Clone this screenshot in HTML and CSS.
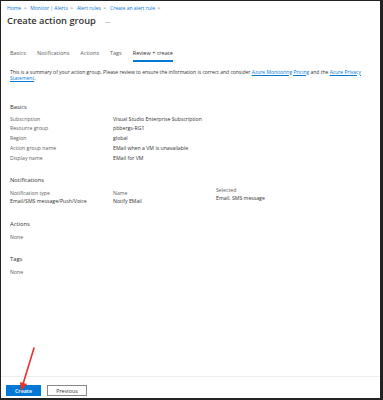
FILE: index.html
```html
<!DOCTYPE html>
<html lang="en">
<head>
    <meta charset="UTF-8">
    <title>Create action group</title>
    <link rel="stylesheet" href="styles.css">
</head>
<body>
    <div class="frame">
        <div class="header">
            <div class="breadcrumb">
                <a>Home</a><span class="sep">&gt;</span>
                <a>Monitor | Alerts</a><span class="sep">&gt;</span>
                <a>Alert rules</a><span class="sep">&gt;</span>
                <a>Create an alert rule</a><span class="sep">&gt;</span>
            </div>
            <h1>Create action group <span class="more">&middot;&middot;&middot;</span></h1>
        </div>

        <div class="content">
            <div class="tabs">
                <span class="tab">Basics</span>
                <span class="tab">Notifications</span>
                <span class="tab">Actions</span>
                <span class="tab">Tags</span>
                <span class="tab active">Review + create</span>
            </div>

            <p class="intro">This is a summary of your action group. Please review to ensure the information is correct and consider <a>Azure Monitoring Pricing</a> and the <a>Azure Privacy</a> <a>Statement</a>.</p>

            <div class="section first">
                <h3>Basics</h3>
                <div class="props">
                    <span class="label">Subscription</span><span>Visual Studio Enterprise Subscription</span>
                    <span class="label">Resource group</span><span>pbbergs-RG1</span>
                    <span class="label">Region</span><span>global</span>
                    <span class="label">Action group name</span><span>EMail when a VM is unavailable</span>
                    <span class="label">Display name</span><span>EMail for VM</span>
                </div>
            </div>

            <div class="section">
                <h3>Notifications</h3>
                <div class="table">
                    <div class="col">
                        <span class="label">Notification type</span>
                        <span>Email/SMS message/Push/Voice</span>
                    </div>
                    <div class="col">
                        <span class="label">Name</span>
                        <span>Notify EMail</span>
                    </div>
                    <div class="col raised">
                        <span class="label">Selected</span>
                        <span>Email, SMS message</span>
                    </div>
                </div>
            </div>

            <div class="section">
                <h3>Actions</h3>
                <span class="label">None</span>
            </div>

            <div class="section">
                <h3>Tags</h3>
                <span class="label">None</span>
            </div>
        </div>

        <div class="footer">
            <button class="btn primary">Create</button>
            <button class="btn">Previous</button>
            <svg class="arrow" width="30" height="50" viewBox="0 0 30 50">
                <line x1="20" y1="2" x2="9" y2="38" stroke="#e8322c" stroke-width="1.6" stroke-linecap="round"/>
                <polygon points="6,36 13,38 7,45" fill="#e8322c"/>
            </svg>
        </div>
    </div>
</body>
</html>
```

FILE: styles.css
```css
* {
    box-sizing: border-box;
    margin: 0;
    padding: 0;
}

body {
    font-family: 'Open Sans', 'Noto Sans', sans-serif;
    color: #323130;
    background: #fff;
}

.frame {
    position: relative;
    width: 383px;
    height: 400px;
    border-top: 1px solid #222;
    border-left: 1px solid #222;
    border-right: 3px solid #222;
    border-bottom: 2px solid #222;
    display: flex;
    flex-direction: column;
}

.header {
    padding: 3px 6px 0;
}

.breadcrumb {
    font-size: 5px;
    color: #0078d4;
    line-height: 8px;
}

.breadcrumb .sep {
    color: #605e5c;
    margin: 0 2.5px;
}

h1 {
    font-size: 9.3px;
    font-weight: 600;
    line-height: 14px;
    margin-top: 2px;
}

h1 .more {
    font-size: 6px;
    color: #605e5c;
    margin-left: 7px;
    vertical-align: middle;
}

.content {
    flex: 1;
    padding: 0 9px;
}

.tabs {
    display: flex;
    gap: 11px;
    font-size: 5.5px;
    margin-top: 20px;
}

.tab {
    color: #605e5c;
    padding-bottom: 3px;
}

.tab.active {
    color: #323130;
    border-bottom: 2px solid #0078d4;
}

.intro {
    font-size: 5px;
    line-height: 6.5px;
    margin-top: 7px;
}

.intro a {
    color: #0078d4;
    text-decoration: underline;
}

.section {
    margin-top: 14px;
    font-size: 5.2px;
}

.section.first {
    margin-top: 21px;
}

.section h3 {
    font-size: 5.8px;
    font-weight: 400;
    line-height: 8px;
    margin-bottom: 5px;
}

.label {
    color: #605e5c;
}

.props {
    display: grid;
    grid-template-columns: 103px 1fr;
    row-gap: 2.8px;
    line-height: 7px;
}

.table {
    display: grid;
    grid-template-columns: 103px 103px 1fr;
    line-height: 8.5px;
}

.col {
    display: flex;
    flex-direction: column;
}

.col.raised {
    margin-top: -3px;
}

.footer {
    position: relative;
    border-top: 1px solid #eee;
    padding: 8px 5px 2px;
    display: flex;
    gap: 6px;
}

.btn {
    font-family: inherit;
    font-size: 5.4px;
    height: 11px;
    width: 40px;
    background: #fff;
    color: #323130;
    border: 1px solid #8a8886;
}

.btn.primary {
    width: 35px;
    background: #0078d4;
    border-color: #0078d4;
    color: #fff;
    font-weight: 600;
}

.arrow {
    position: absolute;
    left: 13px;
    top: -31px;
}
```
